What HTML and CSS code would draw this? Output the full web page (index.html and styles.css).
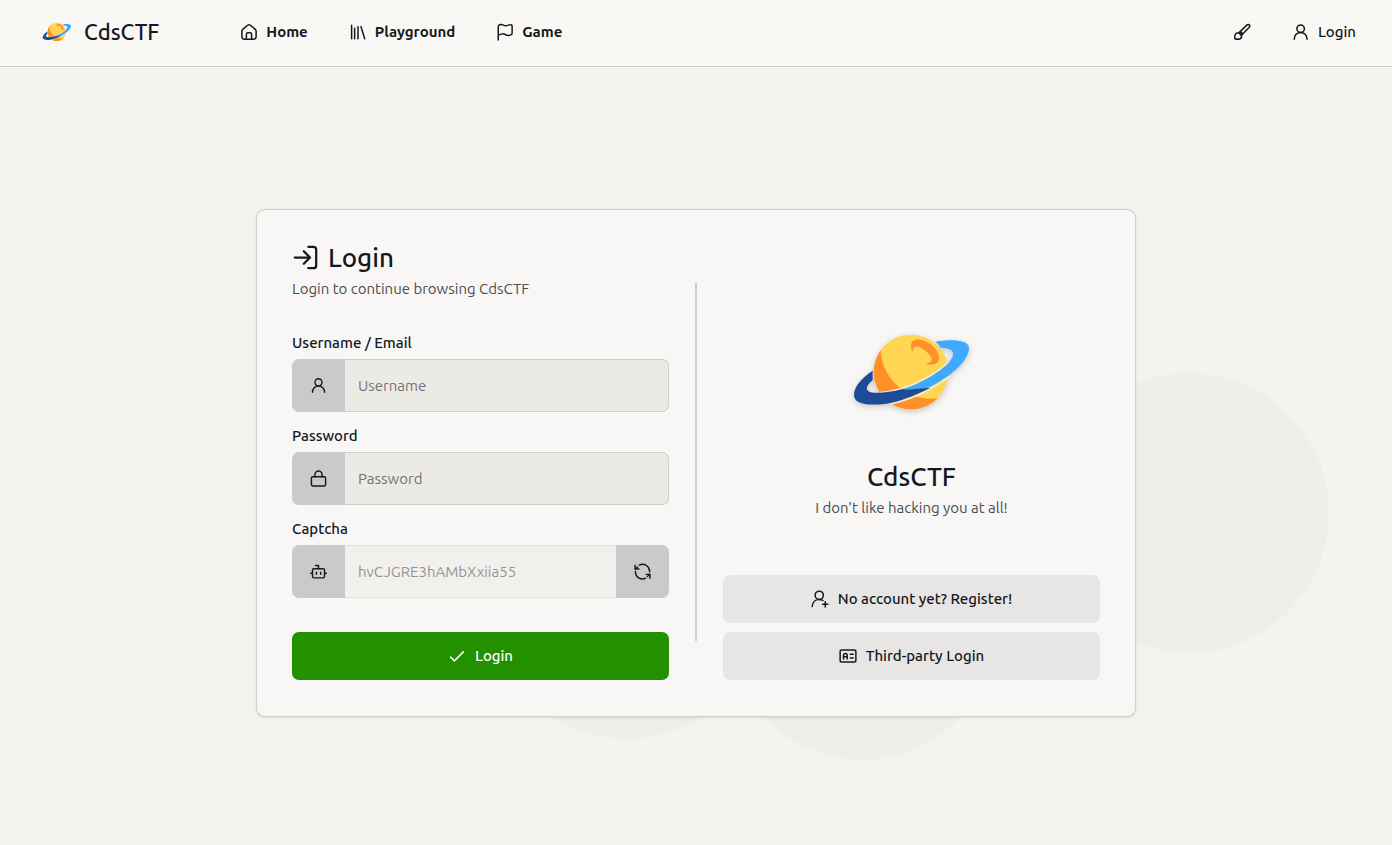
FILE: index.html
```
<!DOCTYPE html>
<html lang="en">
<head>
    <meta charset="UTF-8">
    <meta name="viewport" content="width=device-width, initial-scale=1.0">
    <title>Login - CdsCTF</title>
    <link rel="stylesheet" href="styles.css">
</head>
<body>

    <!-- Shared logo -->
    <svg class="sprite" aria-hidden="true">
        <defs>
            <clipPath id="planet-clip"><circle cx="213" cy="157" r="112"/></clipPath>
            <symbol id="logo" viewBox="36 37 360 243">
                <circle cx="213" cy="157" r="112" fill="#ffd552"/>
                <g clip-path="url(#planet-clip)" fill="#ff9029">
                    <path d="M122 92C124 140 150 184 188 212L100 235 90 90z"/>
                    <path d="M145 255C180 246 205 235 222 229C245 236 270 238 300 236L290 280H150z"/>
                </g>
                <path fill="#ff9029" d="M213 80C212 62 228 57 245 61C275 69 300 97 297 118C295 135 275 138 257 132C274 130 281 120 269 106C256 90 235 79 226 81C219 84 220 90 218 96C214 92 213 86 213 80z"/>
                <path fill="none" stroke="#f1eee6" stroke-width="5" d="M120 219C200 213 285 168 325 128M150 252C210 242 275 210 328 170"/>
                <path fill="#3fa9ff" d="M286 66C330 59 387 58 387 86C387 125 325 176 262 206L180 211C240 194 300 157 325 130C345 108 350 85 302 84Q297 74 286 66z"/>
                <path fill="#1d4b96" d="M98 153V182C78 197 75 212 90 217C110 223 150 218 186 209C215 211 240 204 270 205C225 227 180 246 140 252C80 259 42 253 42 226C42 200 65 175 98 153z"/>
            </symbol>
        </defs>
    </svg>

    <div class="backdrop" aria-hidden="true">
        <span class="bubble bubble-right"></span>
        <span class="bubble bubble-left"></span>
        <span class="bubble bubble-center"></span>
    </div>

    <header class="navbar">
        <a class="brand" href="#">
            <svg class="brand-logo" aria-hidden="true"><use href="#logo"/></svg>
            <span>CdsCTF</span>
        </a>
        <nav class="nav-links">
            <a class="nav-link" href="#">
                <svg class="icon" viewBox="0 0 24 24"><path d="M2.500 11c0-1.200.4-2 1.400-2.800l6.300-5.200c1.200-1 2.400-1 3.600 0l6.300 5.200c1 .8 1.400 1.600 1.400 2.800v7q0 3.500-3.500 3.500H6q-3.500 0-3.500-3.500z"/><path d="M8.500 21v-6q0-2 2-2h3q2 0 2 2v6"/></svg>
                Home
            </a>
            <a class="nav-link" href="#">
                <svg class="icon" viewBox="0 0 24 24"><path d="M3.500 3v18M7.500 7v14M12 5v16M16 5l5 16"/></svg>
                Playground
            </a>
            <a class="nav-link" href="#">
                <svg class="icon" viewBox="0 0 24 24"><path d="M3 22.500V5c0-2 1-2.500 3-3 3-.7 5 2.500 8.500 1.500l3.500-1c2.300-.5 3.500 0 3.500 2v9c0 1.700-1 2.200-2.500 2.700-5 1.800-6-1.900-10.500-1.700-2.500.1-4 1-5.500 2"/></svg>
                Game
            </a>
        </nav>
        <div class="nav-actions">
            <button class="nav-button" type="button" aria-label="Theme">
                <svg class="icon" viewBox="0 0 24 24"><path d="M9.500 11.500l8.500-8.300c1.500-1.500 3-1.500 3.800-.7s.8 2.300-.7 3.800l-8.300 8.500z"/><path d="M9.500 11.500l3.300 3.300-1.600 1.700-3.500-3.500z"/><path d="M7.700 13c-2.400-.3-4.200.8-5 3-.4 1.500-.4 3-.2 5 2.500.8 5 .8 7 0 1.700-.9 2.200-2.800 1.700-4.500"/></svg>
            </button>
            <a class="nav-link nav-login" href="#">
                <svg class="icon" viewBox="0 0 24 24"><circle cx="11.500" cy="7.500" r="5"/><path d="M3 21.500c0-5 3.700-9 8.500-9s8.500 4 8.500 9"/></svg>
                Login
            </a>
        </div>
    </header>

    <main class="page">
        <section class="card">
            <form class="column login-form">
                <h1 class="title">
                    <svg class="icon" viewBox="0 0 24 24"><path d="M2.500 12H15M10.500 6.500L16 12l-5.500 5.500"/><path d="M14.500 2.500H19q2.500 0 2.500 2.500v14q0 2.500-2.500 2.500h-4.500"/></svg>
                    Login
                </h1>
                <p class="subtitle">Login to continue browsing CdsCTF</p>

                <div class="fields">
                    <div class="field">
                        <label for="account">Username / Email</label>
                        <div class="input-group">
                            <span class="addon">
                                <svg class="icon" viewBox="0 0 24 24"><circle cx="12" cy="7.500" r="5"/><path d="M3.500 21.500c0-5 3.700-9 8.500-9s8.500 4 8.500 9"/></svg>
                            </span>
                            <input type="text" id="account" placeholder="Username">
                        </div>
                    </div>
                    <div class="field">
                        <label for="password">Password</label>
                        <div class="input-group">
                            <span class="addon">
                                <svg class="icon" viewBox="0 0 24 24"><rect x="2" y="9.500" width="20" height="13" rx="2"/><path d="M7 9.500V6.500a5 5 0 0 1 10 0v3"/></svg>
                            </span>
                            <input type="password" id="password" placeholder="Password">
                        </div>
                    </div>
                    <div class="field">
                        <label for="captcha">Captcha</label>
                        <div class="input-group">
                            <span class="addon">
                                <svg class="icon" viewBox="0 0 24 24"><rect x="3.500" y="8" width="17" height="13" rx="2"/><path d="M12 8V3.500H8M1 14.500h2.500M20.500 14.500H23M9 13v3M15 13v3"/></svg>
                            </span>
                            <input type="text" id="captcha" placeholder="hvCJGRE3hAMbXxiia55" disabled>
                            <button class="addon" type="button" aria-label="Refresh captcha">
                                <svg class="icon" viewBox="0 0 24 24"><path d="M1.500 3v5.500H7M22.500 21.500V16H17"/><path d="M7.500 3A10 10 0 0 1 22 12.500M2 12a10 10 0 0 0 14.500 9.500M2 8.500l3-3M22 16l-3 3"/></svg>
                            </button>
                        </div>
                    </div>
                </div>

                <button class="button button-primary" type="submit">
                    <svg class="icon" viewBox="0 0 24 24"><path d="M3.500 13.500L8.500 18.500 20.500 6.500"/></svg>
                    Login
                </button>
            </form>

            <div class="divider"></div>

            <div class="column about">
                <div class="about-intro">
                    <svg class="about-logo" role="img" aria-label="CdsCTF logo"><use href="#logo"/></svg>
                    <h2 class="title">CdsCTF</h2>
                    <p class="subtitle">I don't like hacking you at all!</p>
                </div>
                <div class="about-actions">
                    <a class="button" href="#">
                        <svg class="icon" viewBox="0 0 24 24"><circle cx="11" cy="7" r="5.500"/><path d="M1.500 22c.5-5.500 3.500-9 9.500-9.500 2 0 3.500.5 5 1.500M19 15.500v7M15.500 19h7"/></svg>
                        No account yet? Register!
                    </a>
                    <button class="button" type="button">
                        <svg class="icon" viewBox="0 0 24 24"><rect x="1.500" y="4" width="21" height="16" rx="2"/><path d="M6 16v-5q0-2.500 2.500-2.500T11 11v5M6 13h5M15 9.500h4M15 14.500h4"/></svg>
                        Third-party Login
                    </button>
                </div>
            </div>
        </section>
    </main>

</body>
</html>
```
FILE: styles.css
```
:root {
    --background-color: #f4f3ef;
    --navbar-background: #f9f8f4;
    --card-background: #f8f7f5;
    --border-color: #cfcec9;
    --text-color: #14181f;
    --muted-color: #4b4c51;
    --input-background: #ebeae4;
    --addon-background: #cacaca;
    --button-background: #e7e6e4;
    --primary-color: #239000;
}

* {
    box-sizing: border-box;
}

body {
    position: relative;
    display: flex;
    flex-direction: column;
    min-height: 100vh;
    margin: 0;
    font-family: Ubuntu, "Noto Sans", "Open Sans", sans-serif;
    font-size: 15px;
    line-height: 24px;
    color: var(--text-color);
    background-color: var(--background-color);
}

a {
    color: inherit;
    text-decoration: none;
}

button,
input {
    font: inherit;
    color: inherit;
}

button {
    padding: 0;
    border: none;
    background: none;
    cursor: pointer;
}

.sprite {
    position: absolute;
    width: 0;
    height: 0;
}

.icon {
    flex: none;
    width: 18px;
    height: 18px;
    fill: none;
    stroke: currentColor;
    stroke-width: 2;
    stroke-linecap: round;
    stroke-linejoin: round;
}

/* Background circles */
.backdrop {
    position: absolute;
    inset: 0;
    overflow: hidden;
    z-index: -1;
}

.bubble {
    position: absolute;
    width: 280px;
    height: 280px;
    border-radius: 50%;
    background-color: #efeeea;
}

.bubble-right {
    top: 373px;
    left: 1049px;
}

.bubble-left {
    top: 459px;
    left: 486px;
}

.bubble-center {
    top: 492px;
    left: 728px;
    width: 268px;
    height: 268px;
}

/* Navbar */
.navbar {
    display: flex;
    align-items: center;
    padding: 0 36px 2px 42px;
    height: 67px;
    background-color: var(--navbar-background);
    border-bottom: 1px solid var(--border-color);
}

.brand {
    display: flex;
    align-items: center;
    gap: 12px;
    font-size: 22px;
    font-weight: 500;
}

.brand-logo {
    width: 30px;
    height: 20px;
}

.nav-links {
    display: flex;
    gap: 41px;
    margin-left: 81px;
}

.nav-link {
    display: flex;
    align-items: center;
    gap: 8px;
    font-weight: 600;
}

.nav-actions {
    display: flex;
    align-items: center;
    gap: 41px;
    margin-left: auto;
}

.nav-button {
    display: flex;
}

.nav-login {
    font-weight: 500;
}

/* Login card */
.page {
    flex: 1;
    display: flex;
    align-items: center;
    justify-content: center;
    padding: 30px 16px 16px;
}

.card {
    display: grid;
    grid-template-columns: 1fr 2px 1fr;
    gap: 26px;
    width: 100%;
    max-width: 880px;
    padding: 34px 35px 36px;
    background-color: var(--card-background);
    border: 1px solid var(--border-color);
    border-radius: 9px;
    box-shadow: 0 1px 3px rgba(0, 0, 0, 0.1);
}

.column {
    display: flex;
    flex-direction: column;
    min-width: 0;
}

.divider {
    margin: 39px 0;
    background-color: var(--border-color);
}

.title {
    display: flex;
    align-items: center;
    gap: 9px;
    margin: 0;
    font-size: 26px;
    font-weight: 500;
    line-height: 26px;
}

.title .icon {
    width: 27px;
    height: 27px;
}

.subtitle {
    margin: 6px 0 0;
    color: var(--muted-color);
}

.fields {
    display: flex;
    flex-direction: column;
    gap: 12px;
    margin: 30px 0 34px;
}

.field {
    display: flex;
    flex-direction: column;
    gap: 4px;
}

.field label {
    font-weight: 500;
}

.input-group {
    display: flex;
    height: 53px;
}

.addon {
    display: flex;
    flex: none;
    align-items: center;
    justify-content: center;
    width: 53px;
    background-color: var(--addon-background);
}

.addon .icon {
    width: 17px;
    height: 17px;
}

.addon:first-child {
    border-radius: 7px 0 0 7px;
}

.addon:last-child {
    border-radius: 0 7px 7px 0;
}

.input-group input {
    flex: 1;
    min-width: 0;
    padding: 0 13px;
    border: 1px solid var(--border-color);
    border-left: none;
    border-radius: 0 7px 7px 0;
    background-color: var(--input-background);
    outline: none;
}

.input-group input::placeholder {
    color: #737374;
    opacity: 1;
}

.input-group input:disabled {
    border-right: none;
    border-radius: 0;
    border-color: #e3e2df;
    background-color: #f1f0ec;
}

.input-group input:disabled::placeholder {
    color: #949494;
}

.button {
    display: flex;
    align-items: center;
    justify-content: center;
    gap: 9px;
    height: 48px;
    border-radius: 7px;
    background-color: var(--button-background);
    font-weight: 500;
}

.button-primary {
    background-color: var(--primary-color);
    color: #fff;
}

/* Right column */
.about-intro {
    display: flex;
    flex: 1;
    flex-direction: column;
    align-items: center;
    justify-content: center;
}

.about-logo {
    width: 120px;
    height: 81px;
    margin: 32px 0 51px;
    filter: drop-shadow(0 2px 3px rgba(0, 0, 0, 0.2));
}

.about-actions {
    display: flex;
    flex-direction: column;
    gap: 9px;
}

@media (max-width: 720px) {
    .card {
        grid-template-columns: 1fr;
    }

    .divider {
        height: 2px;
        margin: 0;
    }
}
```
